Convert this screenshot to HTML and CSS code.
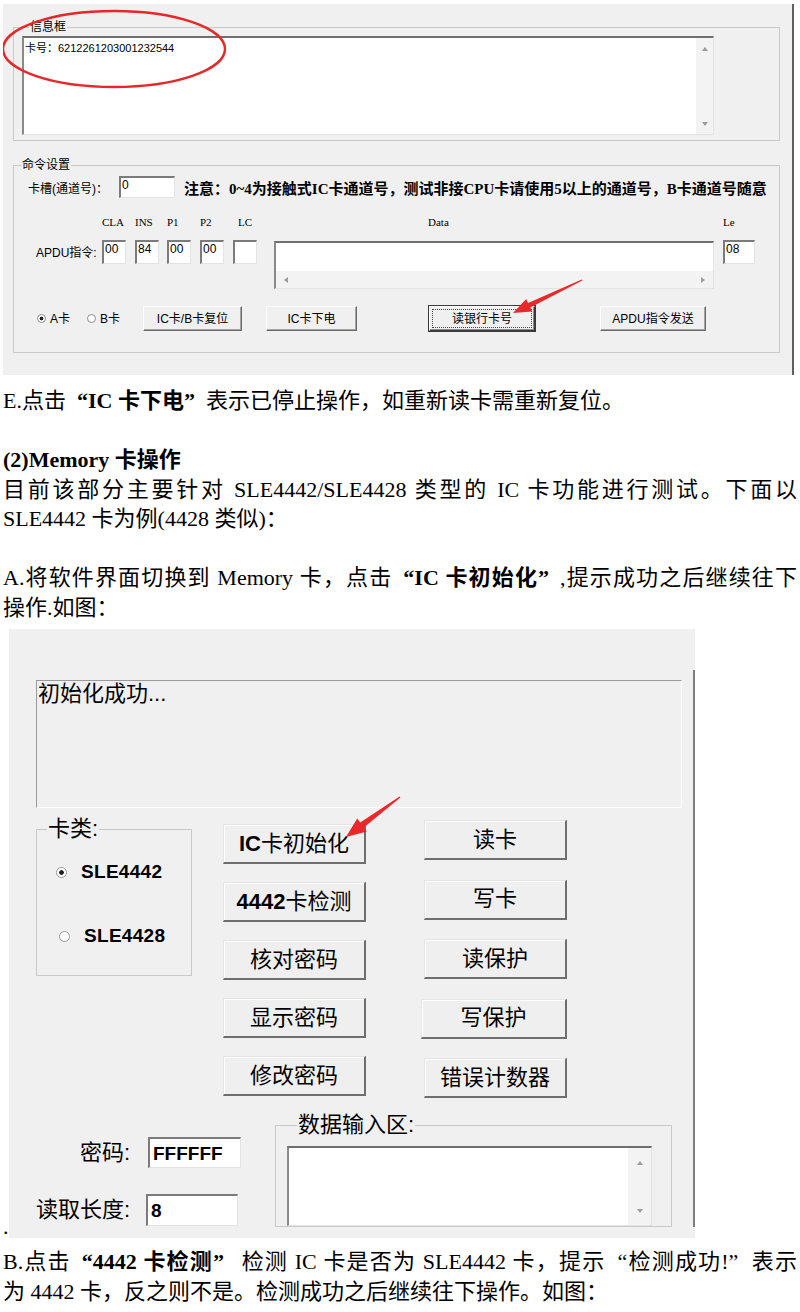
FILE: index.html
```html
<!DOCTYPE html>
<html lang="zh-CN">
<head>
    <meta charset="UTF-8">
    <meta name="viewport" content="width=device-width, initial-scale=1.0">
    <title>IC卡读写器测试说明</title>
    <link rel="stylesheet" href="styles.css">
</head>
<body>
<div class="doc">

    <!-- 截图一：读银行卡号 -->
    <div class="shot shot-bank">
        <fieldset class="group group-info">
            <legend>信息框</legend>
            <div class="memo memo-info">
                <div class="memo-text">卡号：6212261203001232544</div>
                <div class="vscroll"><span class="tri up"></span><span class="tri down"></span></div>
            </div>
        </fieldset>

        <fieldset class="group group-cmd">
            <legend>命令设置</legend>
            <div class="slot-row">
                <span class="slot-label">卡槽(通道号)：</span>
                <span class="edit slot-edit">0</span>
                <span class="note">注意：0~4为接触式IC卡通道号，测试非接CPU卡请使用5以上的通道号，B卡通道号随意</span>
            </div>

            <div class="apdu">
                <span></span>
                <span class="col-head">CLA</span>
                <span class="col-head">INS</span>
                <span class="col-head">P1</span>
                <span class="col-head">P2</span>
                <span class="col-head lc">LC</span>
                <span class="col-head data">Data</span>
                <span class="col-head">Le</span>

                <span class="apdu-label">APDU指令:</span>
                <span class="edit cell-edit">00</span>
                <span class="edit cell-edit">84</span>
                <span class="edit cell-edit">00</span>
                <span class="edit cell-edit">00</span>
                <span class="edit cell-edit"></span>
                <div class="memo data-box">
                    <div class="data-top"></div>
                    <div class="hscroll"><span class="tri left"></span><span class="tri right"></span></div>
                </div>
                <span class="edit le-edit">08</span>
            </div>

            <div class="action-row">
                <span class="radio"><span class="ring on"></span>A卡</span>
                <span class="radio radio-b"><span class="ring"></span>B卡</span>
                <span class="wbtn btn-reset">IC卡/B卡复位</span>
                <span class="wbtn btn-off">IC卡下电</span>
                <span class="wbtn default btn-bank"><span class="focus">读银行卡号</span></span>
                <span class="wbtn btn-send">APDU指令发送</span>
            </div>
        </fieldset>

        <svg class="marks" width="791" height="371" viewBox="3 4 791 371">
            <ellipse cx="114" cy="49" rx="111" ry="38" fill="none" stroke="#e6282a" stroke-width="2.4"/>
            <polygon fill="#e8282b" points="513,313 526.2,298.9 528.1,302.9 581.7,279.4 582.3,280.6 530.3,307.5 532.2,311.5"/>
        </svg>
    </div>

    <p class="line after-shot">E.点击<b><span class="ql">“</span>IC 卡下电<span class="qr">”</span></b>表示已停止操作，如重新读卡需重新复位。</p>
    <p class="line blank"></p>
    <p class="line"><b>(2)Memory 卡操作</b></p>
    <p class="line full">目前该部分主要针对 SLE4442/SLE4428 类型的 IC 卡功能进行测试。下面以</p>
    <p class="line">SLE4442 卡为例(4428 类似)：</p>
    <p class="line blank"></p>
    <p class="line full">A.将软件界面切换到 Memory 卡，点击<b><span class="ql">“</span>IC 卡初始化<span class="qr">”</span></b>,提示成功之后继续往下</p>
    <p class="line">操作.如图：</p>

    <!-- 截图二：Memory 卡 -->
    <div class="fig-line">
        <span class="dot">.</span>
        <div class="shot shot-mem">
            <div class="mem-frame">
                <div class="status">初始化成功...</div>

                <div class="mem-mid">
                    <fieldset class="group kl">
                        <legend>卡类:</legend>
                        <div class="opt opt-a"><span class="ring big on"></span><b>SLE4442</b></div>
                        <div class="opt opt-b"><span class="ring big"></span><b>SLE4428</b></div>
                    </fieldset>

                    <div class="col-btns col-a">
                        <span class="mbtn"><b>IC</b>卡初始化</span>
                        <span class="mbtn"><b>4442</b>卡检测</span>
                        <span class="mbtn">核对密码</span>
                        <span class="mbtn">显示密码</span>
                        <span class="mbtn">修改密码</span>
                    </div>

                    <div class="col-btns col-b">
                        <span class="mbtn">读卡</span>
                        <span class="mbtn">写卡</span>
                        <span class="mbtn">读保护</span>
                        <span class="mbtn shift">写保护</span>
                        <span class="mbtn">错误计数器</span>
                    </div>
                </div>

                <div class="mem-bottom">
                    <div class="pw-fields">
                        <div class="pw-row r1">
                            <span class="pw-label">密码:</span>
                            <span class="edit pw-edit">FFFFFF</span>
                        </div>
                        <div class="pw-row r2">
                            <span class="pw-label">读取长度:</span>
                            <span class="edit pw-edit">8</span>
                        </div>
                    </div>

                    <fieldset class="group data-group">
                        <legend>数据输入区:</legend>
                        <div class="memo data-memo">
                            <div class="memo-text"></div>
                            <div class="vscroll wide"><span class="tri up"></span><span class="tri down"></span></div>
                        </div>
                    </fieldset>
                </div>
            </div>

            <svg class="marks" width="686" height="609" viewBox="9 629 686 609">
                <polygon fill="#e8282b" points="346,837 357.2,818.6 360.2,822.6 399.6,796.4 400.4,797.6 363.8,827.4 366.8,831.4"/>
            </svg>
        </div>
    </div>

    <p class="line after-fig full">B.点击<b><span class="ql">“</span>4442 卡检测<span class="qr">”</span></b> 检测 IC 卡是否为 SLE4442 卡，提示<span class="ql">“</span>检测成功!<span class="qr">”</span>表示</p>
    <p class="line">为 4442 卡，反之则不是。检测成功之后继续往下操作。如图：</p>

</div>
</body>
</html>
```

FILE: styles.css
```css
html, body {
    margin: 0;
    padding: 0;
    background-color: #ffffff;
}

body {
    font-family: "Liberation Serif", "Noto Sans CJK SC", serif;
    font-size: 22px;
    line-height: 29.5px;
    color: #000;
}

.doc {
    width: 794px;
    padding: 4px 3px 0;
}

/* 文档正文 */
.line {
    margin: 0;
    white-space: nowrap;
}

.line.full {
    text-align: justify;
    text-align-last: justify;
}

.line.blank {
    height: 29.5px;
}

.after-shot {
    margin-top: 11px;
}

.after-fig {
    margin-top: 9px;
}

.ql, .qr {
    display: inline-block;
    width: 1em;
}

.ql {
    text-align: right;
    text-align-last: right;
}

.qr {
    text-align: left;
    text-align-last: left;
}

/* 截图通用 */
.shot {
    position: relative;
    box-sizing: border-box;
    background-color: #f0f0f0;
    font-family: "Liberation Sans", "Noto Sans CJK SC", sans-serif;
    color: #000;
}

.marks {
    position: absolute;
    left: 0;
    top: 0;
    pointer-events: none;
}

.group {
    box-sizing: border-box;
    margin: 0;
    padding: 0;
    min-width: 0;
    border: 1px solid #c9c9c9;
}

.group legend {
    padding: 0 1px;
}

.edit {
    box-sizing: border-box;
    display: block;
    background-color: #fff;
    border-style: solid;
    border-width: 2px 1px 1px 2px;
    border-color: #7b7b7b #e3e3e3 #e3e3e3 #7b7b7b;
}

.memo {
    box-sizing: border-box;
    display: flex;
    background-color: #fff;
    border-style: solid;
    border-width: 2px 1px 1px 2px;
    border-color: #6f6f6f #e3e3e3 #e3e3e3 #8a8a8a;
}

.memo-text {
    flex: 1;
}

.vscroll {
    width: 17px;
    background-color: #f3f3f3;
    display: flex;
    flex-direction: column;
    justify-content: space-between;
    align-items: center;
    padding: 9px 0 8px;
    box-sizing: border-box;
}

.vscroll.wide {
    width: 23px;
    padding: 13px 0 12px;
}

.tri {
    width: 0;
    height: 0;
    border: 0 solid transparent;
}

.tri.up {
    border-width: 0 3.5px 4px;
    border-bottom-color: #9b9b9b;
}

.tri.down {
    border-width: 4px 3.5px 0;
    border-top-color: #9b9b9b;
}

.tri.left {
    border-width: 3.5px 4px 3.5px 0;
    border-right-color: #9b9b9b;
}

.tri.right {
    border-width: 3.5px 0 3.5px 4px;
    border-left-color: #9b9b9b;
}

/* 截图一 */
.shot-bank {
    width: 791px;
    height: 371px;
    padding: 16px 0 0 10px;
    border-right: 2px solid #5f5f5f;
    font-size: 12px;
    line-height: 14px;
}

.shot-bank .group {
    width: 767px;
}

.shot-bank .group legend {
    margin-left: 7px;
}

.group-info {
    padding: 0 0 5px 8px;
}

.memo-info {
    margin-top: 2px;
    width: 692px;
    height: 99px;
}

.memo-info .memo-text {
    font-size: 11px;
    padding: 3px 0 0 1px;
}

.group-cmd {
    height: 195px;
    margin-top: 17px;
}

.slot-row {
    display: flex;
    align-items: center;
    height: 22px;
    margin: 4px 0 0 14px;
}

.slot-label {
    width: 91px;
    padding-top: 3px;
}

.slot-edit {
    width: 56px;
    height: 22px;
    padding-left: 1px;
}

.note {
    margin-left: 9px;
    padding-top: 3px;
    font-family: "Liberation Serif", "Noto Sans CJK SC", serif;
    font-size: 15px;
    font-weight: bold;
    white-space: nowrap;
}

.apdu {
    display: grid;
    grid-template-columns: 66px 33px 32px 33px 33px 41px 449px 32px;
    grid-template-rows: 14px auto;
    row-gap: 11px;
    margin: 17px 0 0 22px;
    align-items: start;
}

.col-head {
    font-family: "Liberation Serif", serif;
    font-size: 11px;
}

.col-head.lc {
    width: 24px;
    text-align: center;
}

.col-head.data {
    padding-left: 154px;
}

.apdu-label {
    margin-top: 6px;
}

.cell-edit {
    width: 24px;
    height: 24px;
    padding-left: 1px;
}

.le-edit {
    width: 32px;
    height: 24px;
    padding-left: 1px;
}

.data-box {
    width: 440px;
    height: 48px;
    margin-top: 1px;
    flex-direction: column;
}

.data-top {
    flex: 1;
}

.hscroll {
    height: 17px;
    background-color: #f3f3f3;
    display: flex;
    justify-content: space-between;
    align-items: center;
    padding: 0 8px;
}

.action-row {
    display: flex;
    align-items: center;
    height: 25px;
    margin: 17px 0 0 23px;
}

.radio {
    display: flex;
    align-items: center;
    width: 40px;
}

.radio-b {
    margin-left: 10px;
}

.ring {
    box-sizing: border-box;
    width: 9px;
    height: 9px;
    margin-right: 4px;
    border: 1px solid #8c8c8c;
    border-radius: 50%;
    background: #fff;
}

.ring.on {
    background: radial-gradient(circle, #1e1e1e 0 1.6px, #fff 2.2px);
}

.wbtn {
    box-sizing: border-box;
    display: flex;
    align-items: center;
    justify-content: center;
    height: 25px;
    background-color: #f0f0f0;
    border: 1px solid;
    border-color: #fff #696969 #696969 #fff;
    box-shadow: inset -1px -1px 0 #a3a3a3;
}

.btn-reset {
    width: 99px;
    margin-left: 16px;
}

.btn-off {
    width: 91px;
    margin-left: 24px;
}

.btn-bank {
    width: 106px;
    margin-left: 72px;
}

.btn-send {
    width: 106px;
    margin-left: 65px;
}

.wbtn.default {
    border-color: #fff #3a3a3a #3a3a3a #fff;
    box-shadow: 0 0 0 1px #3a3a3a, inset -1px -1px 0 #8a8a8a;
}

.focus {
    flex: 1;
    align-self: stretch;
    margin: 2px;
    border: 1px dotted #444;
    display: flex;
    align-items: center;
    justify-content: center;
}

/* 截图二 */
.fig-line {
    display: flex;
    align-items: flex-end;
    margin-top: 7px;
}

.dot {
    width: 6px;
    line-height: 22px;
}

.shot-mem {
    width: 686px;
    height: 609px;
    padding-top: 41px;
    font-size: 22px;
    line-height: 26px;
}

.mem-frame {
    box-sizing: border-box;
    height: 557px;
    padding: 10px 0 0 27px;
    border-right: 2px solid #7d7d7d;
}

.status {
    box-sizing: border-box;
    width: 646px;
    height: 128px;
    padding-left: 1px;
    border: 1px solid;
    border-color: #9a9a9a #fff #fff #9a9a9a;
}

.mem-mid {
    display: flex;
    align-items: flex-start;
}

.kl {
    width: 156px;
    height: 160px;
    margin-top: 8px;
}

.kl legend,
.data-group legend {
    margin-left: 10px;
}

.opt {
    display: flex;
    align-items: center;
    line-height: 24px;
}

.opt b {
    font-family: "Liberation Sans", sans-serif;
    font-size: 19px;
    letter-spacing: 0.3px;
}

.opt-a {
    margin-top: 18px;
    padding-left: 19px;
}

.opt-b {
    margin-top: 40px;
    padding-left: 22px;
}

.ring.big {
    width: 11px;
    height: 11px;
    margin-right: 14px;
    border-color: #9a9a9a;
}

.ring.big.on {
    background: radial-gradient(circle, #1e1e1e 0 2px, #fff 2.6px);
}

.col-btns {
    display: flex;
    flex-direction: column;
    width: 143px;
}

.col-a {
    margin: 16px 0 0 31px;
    gap: 18px;
}

.col-b {
    margin: 12px 0 0 58px;
    gap: 19.5px;
}

.mbtn {
    box-sizing: border-box;
    display: flex;
    align-items: center;
    justify-content: center;
    height: 40px;
    background-color: #efefef;
    border-style: solid;
    border-width: 1px 2px 2px 1px;
    border-color: #e4e4e4 #6e6e6e #6e6e6e #e4e4e4;
    box-shadow: inset 1px 1px 0 #fff;
}

.mbtn b {
    font-family: "Liberation Sans", sans-serif;
}

.mbtn.shift {
    margin-left: -3px;
}

.mem-bottom {
    display: flex;
    align-items: flex-start;
    margin-top: 14px;
}

.pw-fields {
    width: 213px;
    margin-left: -8px;
}

.pw-row {
    display: flex;
    align-items: center;
    height: 31px;
}

.pw-row.r1 {
    margin-top: 25px;
}

.pw-row.r2 {
    margin-top: 26px;
    height: 32px;
}

.pw-label {
    width: 102px;
    text-align: right;
    white-space: nowrap;
}

.pw-edit {
    height: 100%;
    padding: 2px 0 0 3px;
    font-family: "Liberation Sans", sans-serif;
    font-size: 19px;
    font-weight: bold;
    line-height: 26px;
}

.r1 .pw-edit {
    width: 93px;
    margin-left: 18px;
}

.r2 .pw-edit {
    width: 92px;
    margin-left: 16px;
}

.data-group {
    width: 397px;
    margin-left: 34px;
    padding-left: 11px;
}

.data-memo {
    width: 365px;
    height: 80px;
    margin-top: 8px;
}
```
